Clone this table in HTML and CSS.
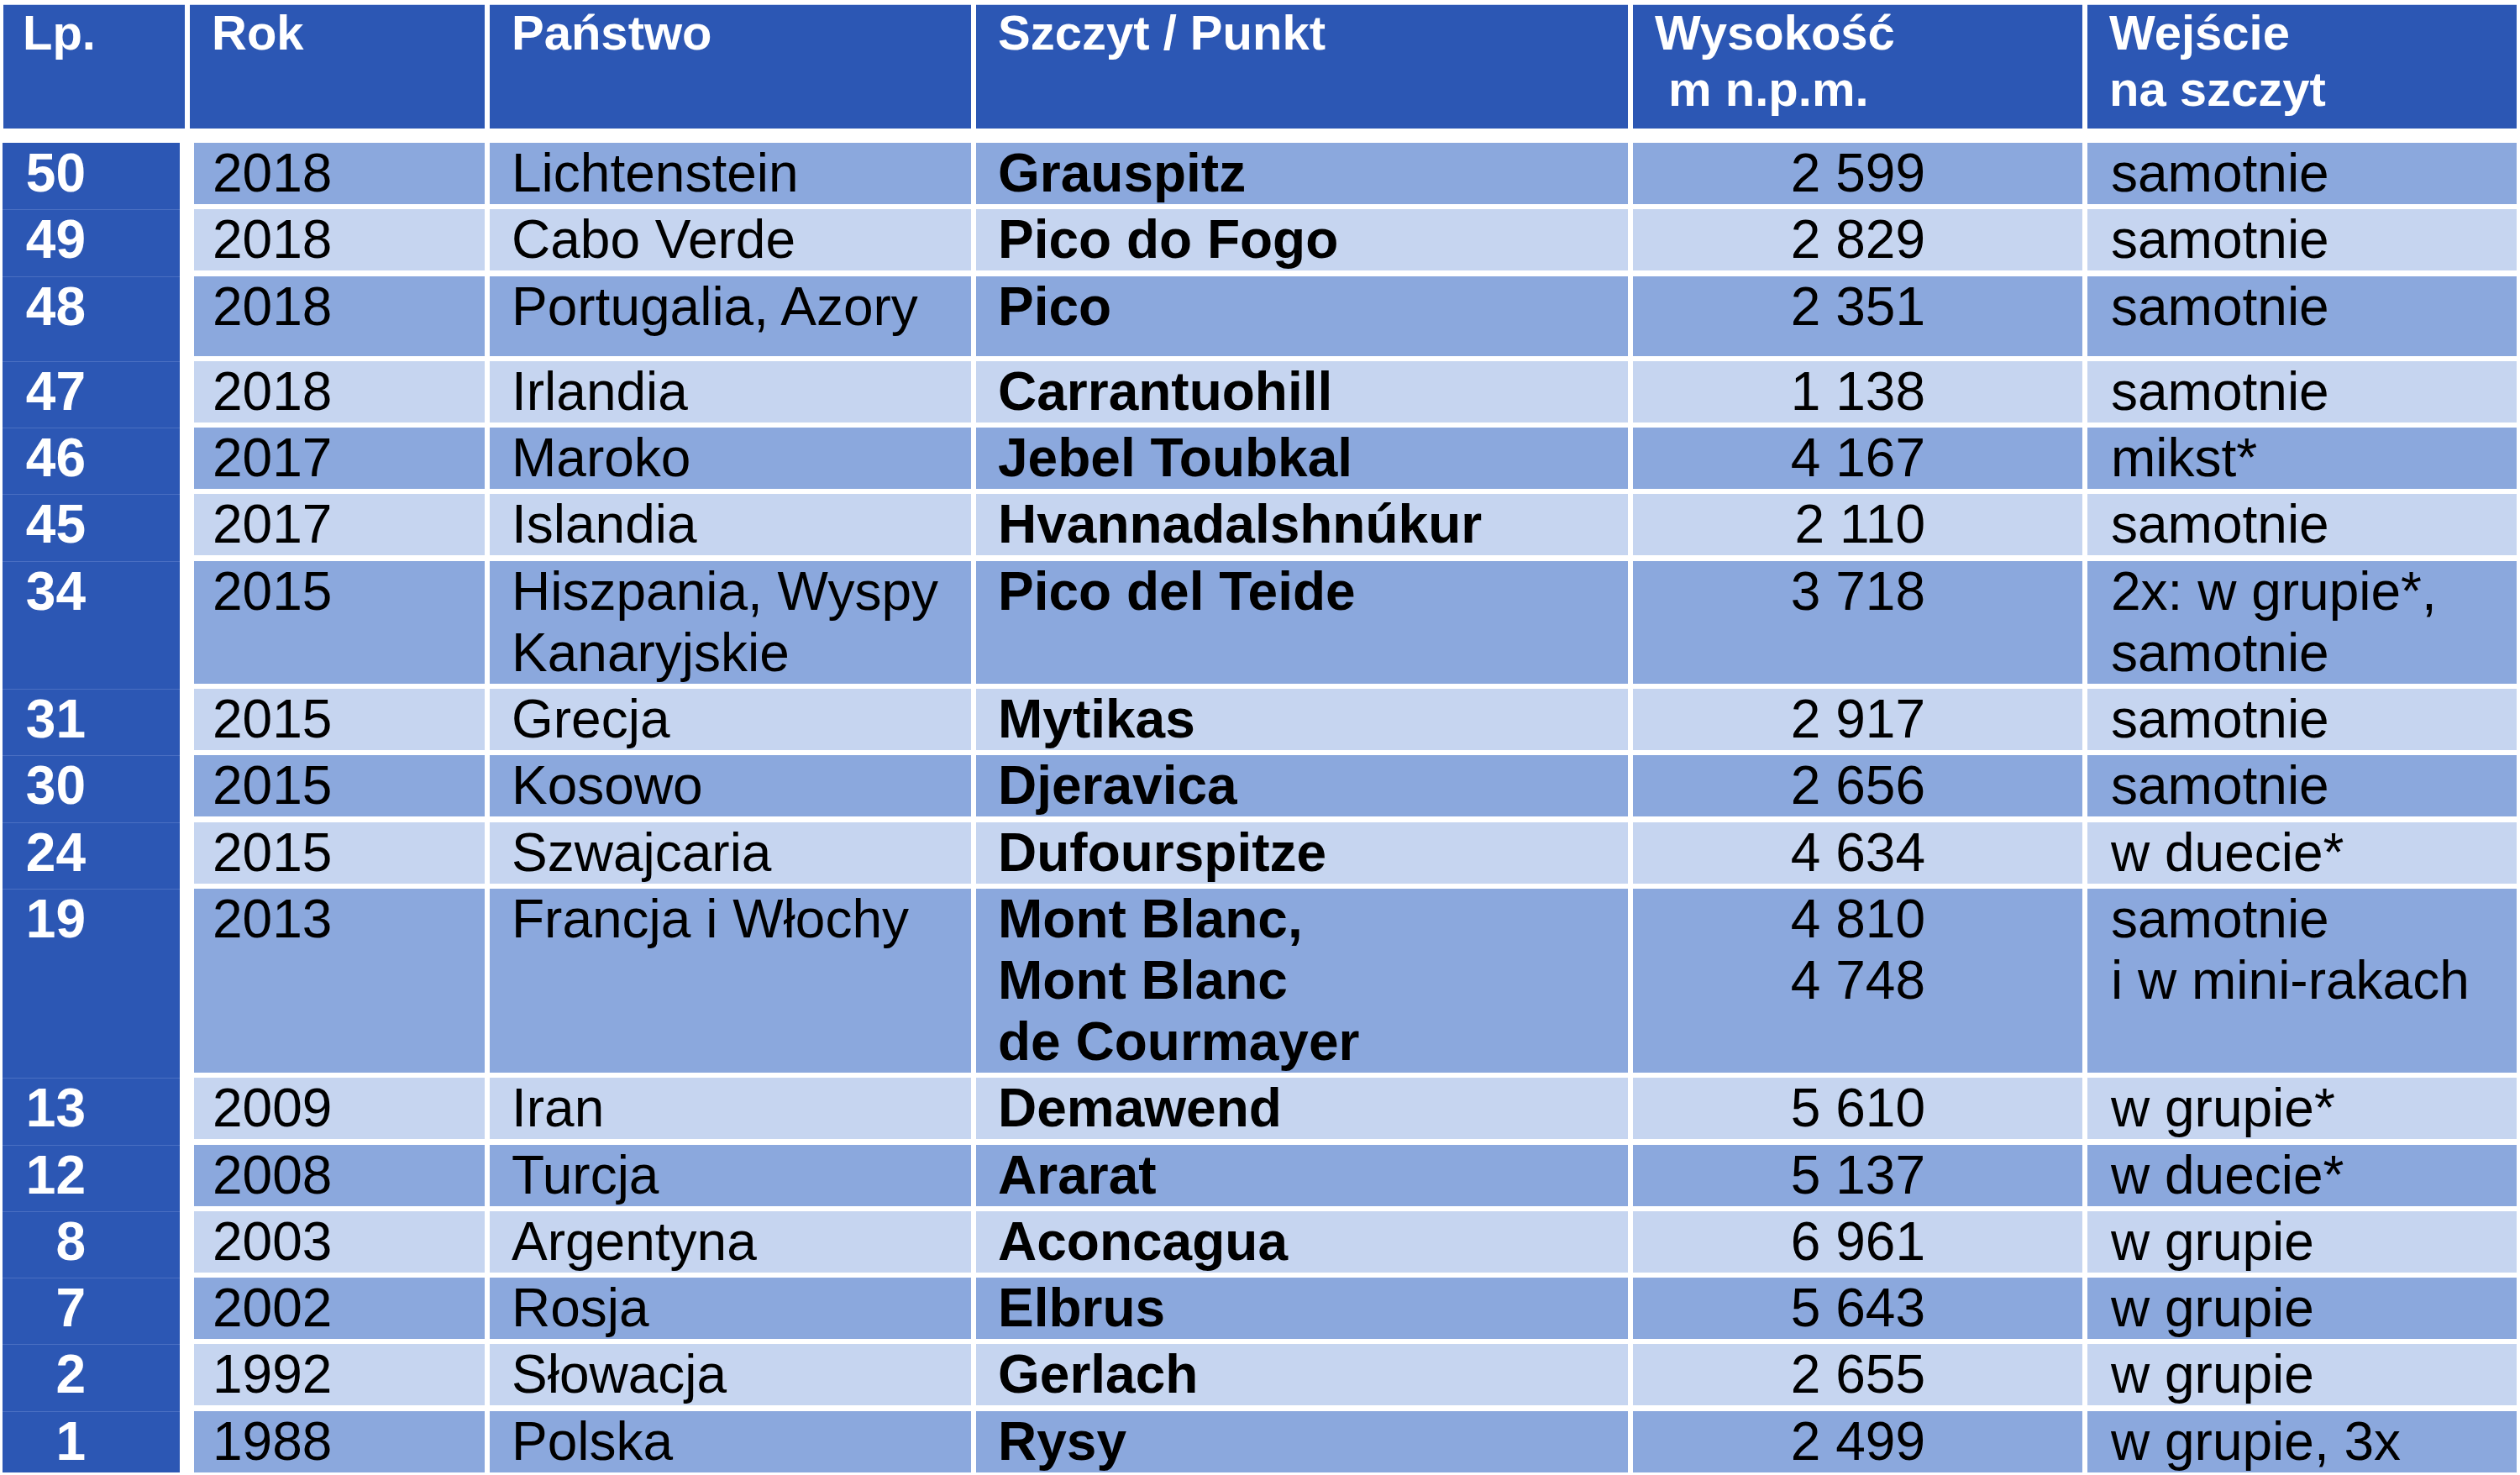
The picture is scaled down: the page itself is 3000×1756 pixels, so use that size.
FILE: index.html
```html
<!DOCTYPE html>
<html lang="pl">
<head>
<meta charset="utf-8">
<title>Szczyty</title>
<link rel="stylesheet" href="styles.css">
</head>
<body>
<div class="table">
  <div class="head">
    <div class="hcell">Lp.</div>
    <div class="hcell">Rok</div>
    <div class="hcell">Państwo</div>
    <div class="hcell">Szczyt / Punkt</div>
    <div class="hcell">Wysokość<br>&nbsp;m n.p.m.</div>
    <div class="hcell hlast">Wejście<br>na szczyt</div>
  </div>
  <div class="rows">
    <div class="row dark"><div class="lp">50</div><div class="c yr">2018</div><div class="c">Lichtenstein</div><div class="c pk">Grauspitz</div><div class="c ht">2 599</div><div class="c wj">samotnie</div></div>
    <div class="row light"><div class="lp">49</div><div class="c yr">2018</div><div class="c">Cabo Verde</div><div class="c pk">Pico do Fogo</div><div class="c ht">2 829</div><div class="c wj">samotnie</div></div>
    <div class="row dark tall"><div class="lp">48</div><div class="c yr">2018</div><div class="c">Portugalia, Azory</div><div class="c pk">Pico</div><div class="c ht">2 351</div><div class="c wj">samotnie</div></div>
    <div class="row light"><div class="lp">47</div><div class="c yr">2018</div><div class="c">Irlandia</div><div class="c pk">Carrantuohill</div><div class="c ht">1 138</div><div class="c wj">samotnie</div></div>
    <div class="row dark"><div class="lp">46</div><div class="c yr">2017</div><div class="c">Maroko</div><div class="c pk">Jebel Toubkal</div><div class="c ht">4 167</div><div class="c wj">mikst*</div></div>
    <div class="row light"><div class="lp">45</div><div class="c yr">2017</div><div class="c">Islandia</div><div class="c pk">Hvannadalshnúkur</div><div class="c ht">2 110</div><div class="c wj">samotnie</div></div>
    <div class="row dark"><div class="lp">34</div><div class="c yr">2015</div><div class="c">Hiszpania, Wyspy<br>Kanaryjskie</div><div class="c pk">Pico del Teide</div><div class="c ht">3 718</div><div class="c wj">2x: w grupie*,<br>samotnie</div></div>
    <div class="row light"><div class="lp">31</div><div class="c yr">2015</div><div class="c">Grecja</div><div class="c pk">Mytikas</div><div class="c ht">2 917</div><div class="c wj">samotnie</div></div>
    <div class="row dark"><div class="lp">30</div><div class="c yr">2015</div><div class="c">Kosowo</div><div class="c pk">Djeravica</div><div class="c ht">2 656</div><div class="c wj">samotnie</div></div>
    <div class="row light"><div class="lp">24</div><div class="c yr">2015</div><div class="c">Szwajcaria</div><div class="c pk">Dufourspitze</div><div class="c ht">4 634</div><div class="c wj">w duecie*</div></div>
    <div class="row dark"><div class="lp">19</div><div class="c yr">2013</div><div class="c">Francja i Włochy</div><div class="c pk">Mont Blanc,<br>Mont Blanc<br>de Courmayer</div><div class="c ht">4 810<br>4 748</div><div class="c wj">samotnie<br>i w mini-rakach</div></div>
    <div class="row light"><div class="lp">13</div><div class="c yr">2009</div><div class="c">Iran</div><div class="c pk">Demawend</div><div class="c ht">5 610</div><div class="c wj">w grupie*</div></div>
    <div class="row dark"><div class="lp">12</div><div class="c yr">2008</div><div class="c">Turcja</div><div class="c pk">Ararat</div><div class="c ht">5 137</div><div class="c wj">w duecie*</div></div>
    <div class="row light"><div class="lp">8</div><div class="c yr">2003</div><div class="c">Argentyna</div><div class="c pk">Aconcagua</div><div class="c ht">6 961</div><div class="c wj">w grupie</div></div>
    <div class="row dark"><div class="lp">7</div><div class="c yr">2002</div><div class="c">Rosja</div><div class="c pk">Elbrus</div><div class="c ht">5 643</div><div class="c wj">w grupie</div></div>
    <div class="row light"><div class="lp">2</div><div class="c yr">1992</div><div class="c">Słowacja</div><div class="c pk">Gerlach</div><div class="c ht">2 655</div><div class="c wj">w grupie</div></div>
    <div class="row dark"><div class="lp">1</div><div class="c yr">1988</div><div class="c">Polska</div><div class="c pk">Rysy</div><div class="c ht">2 499</div><div class="c wj">w grupie, 3x</div></div>
  </div>
</div>
</body>
</html>
```
FILE: styles.css
```css
html, body {
  margin: 0;
  padding: 0;
  background: #ffffff;
}

body {
  font-family: "Liberation Sans", Arial, sans-serif;
  width: 3000px;
  height: 1756px;
  overflow: hidden;
}

.table {
  padding: 5px 4px 0 3px;
}

.head {
  display: grid;
  grid-template-columns: 216px 351px 573px 776px 535px 511px;
  column-gap: 6px;
  margin-left: 1px;
  height: 148px;
  margin-bottom: 17px;
}

.hcell {
  background: #2c57b4;
  color: #ffffff;
  font-weight: bold;
  font-size: 58px;
  line-height: 67px;
  padding-left: 26px;
  white-space: nowrap;
  box-shadow: inset 0 1px 0 #c9d6f0;
}

.hcell:first-child {
  padding-left: 23px;
}

.rows {
  display: flex;
  flex-direction: column;
}

.row {
  display: grid;
  grid-template-columns: 217px 351px 573px 776px 535px 511px;
  column-gap: 6px;
  font-size: 64px;
  line-height: 73px;
  color: #000000;
}

.row.tall .c {
  min-height: 95px;
}

.c {
  margin-bottom: 6.3px;
  padding-left: 26px;
  white-space: nowrap;
}

.row:last-child .c {
  margin-bottom: 0;
}

.dark .c {
  background: #8ba8dd;
}

.light .c {
  background: #c6d5f0;
}

.lp {
  background: #2c57b4;
  color: #ffffff;
  font-weight: bold;
  text-align: right;
  padding-right: 112px;
  margin-right: 6px;
  box-shadow: inset 0 1px 0 #4a6fc2;
}

.row:first-child .lp {
  box-shadow: none;
}

.yr {
  margin-left: 5px;
  padding-left: 22px;
}

.pk {
  font-weight: bold;
}

.ht {
  padding-left: 0;
  padding-right: 187px;
  text-align: right;
}

.wj {
  padding-left: 28px;
}
```
